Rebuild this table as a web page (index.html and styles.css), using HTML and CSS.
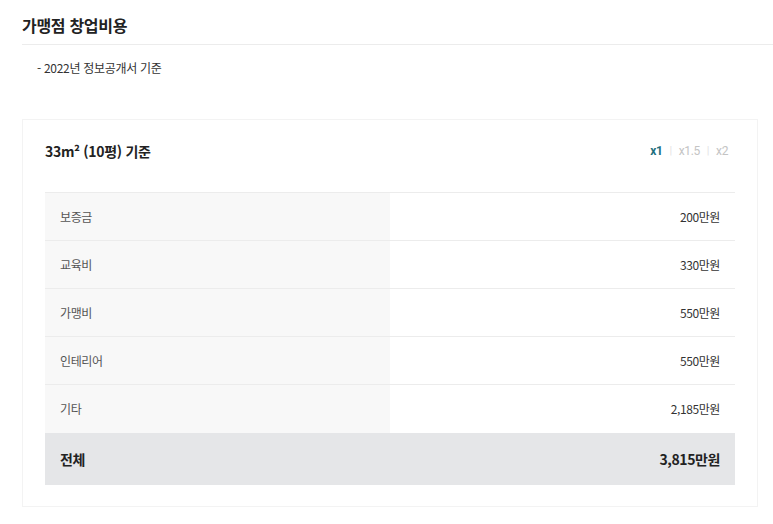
FILE: index.html
```html
<!DOCTYPE html>
<html lang="ko">
<head>
<meta charset="utf-8">
<link rel="stylesheet" href="styles.css">
</head>
<body>
<section class="cost">
  <h2 class="cost-title">가맹점 창업비용</h2>
  <p class="cost-note">- 2022년 정보공개서 기준</p>
  <div class="card">
    <div class="card-head">
      <h3 class="card-title">33m² (10평) 기준</h3>
      <ul class="scale">
        <li class="scale-item active">x1</li>
        <li class="scale-sep">|</li>
        <li class="scale-item">x1.5</li>
        <li class="scale-sep">|</li>
        <li class="scale-item">x2</li>
      </ul>
    </div>
    <table class="cost-table">
      <tbody>
        <tr><th>보증금</th><td>200만원</td></tr>
        <tr><th>교육비</th><td>330만원</td></tr>
        <tr><th>가맹비</th><td>550만원</td></tr>
        <tr><th>인테리어</th><td>550만원</td></tr>
        <tr><th>기타</th><td>2,185만원</td></tr>
        <tr class="total"><th>전체</th><td>3,815만원</td></tr>
      </tbody>
    </table>
  </div>
</section>
</body>
</html>
```
FILE: styles.css
```css
* { box-sizing: border-box; }
body {
  margin: 0;
  background: #fff;
  font-family: "Noto Sans CJK KR", "Noto Sans", sans-serif;
  color: #222;
}
.cost {
  padding: 12px 0 0 22px;
}
.cost-title {
  margin: 0;
  font-size: 16px;
  font-weight: 700;
  line-height: 26px;
  color: #222;
  padding-bottom: 6px;
  border-bottom: 1px solid #ececec;
  letter-spacing: -0.3px;
}
.cost-note {
  margin: 0;
  padding: 14px 0 0 15px;
  font-size: 12px;
  line-height: 18px;
  color: #333;
  letter-spacing: -0.3px;
}
.card {
  margin: 42px 15px 0 0;
  border: 1px solid #f3f3f3;
  padding: 22px 22px 21px;
}
.card-head {
  display: flex;
  justify-content: space-between;
  align-items: center;
  height: 18px;
  margin-bottom: 32px;
}
.card-title {
  margin: 0;
  font-size: 14px;
  font-weight: 700;
  line-height: 18px;
  color: #222;
  letter-spacing: -0.3px;
}
.scale {
  list-style: none;
  margin: 0;
  padding: 0 7px 0 0;
  display: flex;
  gap: 7px;
  font-family: Roboto, "Noto Sans CJK KR", sans-serif;
  font-size: 12px;
  line-height: 18px;
  color: #c4c4c4;
  letter-spacing: -0.4px;
}
.scale-item.active {
  color: #1e6f7e;
  font-weight: 700;
}
.scale-sep {
  color: #e4e4e4;
  font-size: 11px;
}
.cost-table {
  width: 100%;
  border-collapse: collapse;
  table-layout: fixed;
}
.cost-table th,
.cost-table td {
  height: 48px;
  border-top: 1px solid #ececec;
  font-size: 12px;
  font-weight: 400;
  letter-spacing: -0.4px;
  padding: 0 15px;
}
.cost-table th {
  text-align: left;
  background: #f8f8f8;
  color: #555;
}
.cost-table td {
  text-align: right;
  color: #333;
}
.cost-table .total th,
.cost-table .total td {
  height: 52px;
  background: #e5e6e8;
  border-top: none;
  font-size: 14px;
  font-weight: 700;
  color: #222;
}
```
